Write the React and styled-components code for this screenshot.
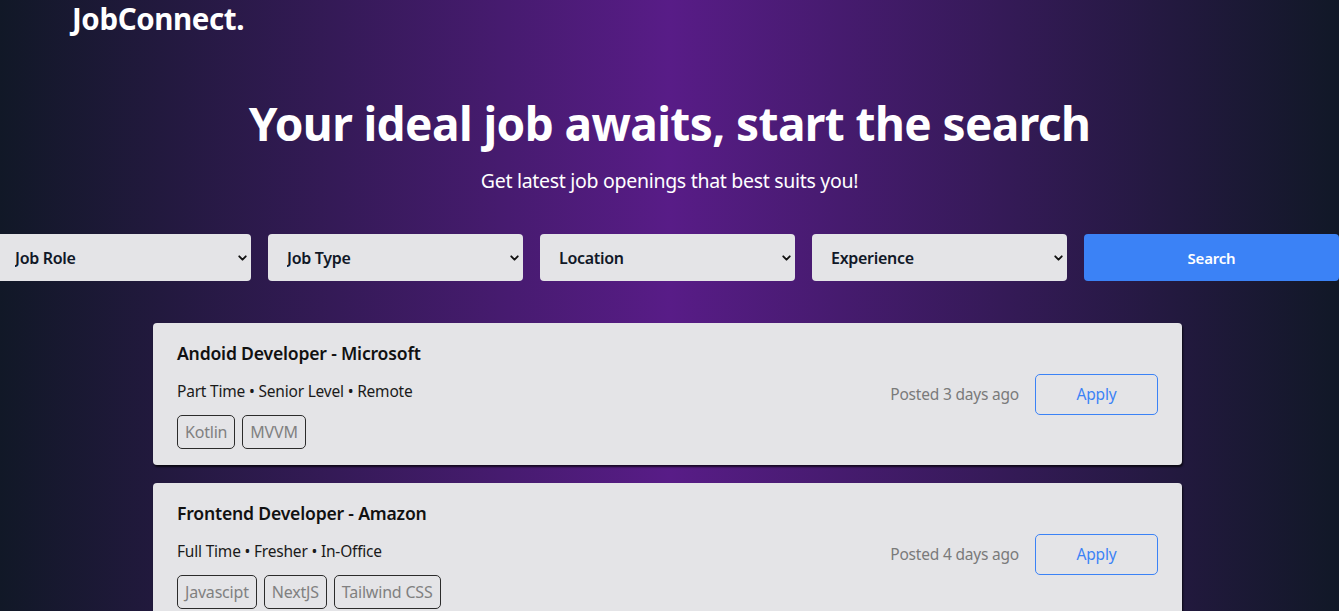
import React from 'react';
import styled, { createGlobalStyle } from 'styled-components';
import { ChevronDown } from 'lucide-react';

const GlobalStyle = createGlobalStyle`
  html, body {
    margin: 0;
    padding: 0;
    overflow: hidden;
  }
  body {
    font-family: 'Noto Sans', 'Open Sans', sans-serif;
    background: #111827;
  }
  * {
    box-sizing: border-box;
  }
`;

const Page = styled.div`
  min-height: 100vh;
  background: linear-gradient(to right, #111827, #581c87, #111827);
  padding-bottom: 40px;
`;

const Nav = styled.nav`
  padding: 1px 72px 0;
`;

const Logo = styled.h1`
  margin: 0;
  font-size: 29.5px;
  line-height: 36px;
  font-weight: 700;
  color: #ffffff;
  letter-spacing: -0.4px;
`;

const Hero = styled.header`
  display: flex;
  flex-direction: column;
  align-items: center;
  padding-top: 58px;
`;

const Headline = styled.h2`
  margin: 0;
  font-size: 46px;
  line-height: 56px;
  font-weight: 700;
  color: #ffffff;
  letter-spacing: -0.6px;
`;

const Subline = styled.p`
  margin: 16px 0 0;
  font-size: 19.5px;
  line-height: 28px;
  color: #ffffff;
  letter-spacing: -0.3px;
`;

const Filters = styled.form`
  display: grid;
  grid-template-columns: repeat(5, 1fr);
  gap: 17px;
  width: calc(100% + 4px);
  margin: 39px 0 0 -4px;
`;

const SelectBox = styled.div`
  position: relative;
  height: 47px;
`;

const Select = styled.select`
  appearance: none;
  width: 100%;
  height: 100%;
  border: none;
  border-radius: 4px;
  background: #e4e4e7;
  padding: 0 30px 0 19px;
  font-family: inherit;
  font-size: 16px;
  font-weight: 600;
  color: #111827;
  letter-spacing: -0.3px;
  outline: none;
`;

const Caret = styled(ChevronDown)`
  position: absolute;
  right: 2px;
  top: 50%;
  transform: translateY(-50%);
  color: #111;
  pointer-events: none;
`;

const SearchButton = styled.button`
  height: 47px;
  border: none;
  border-radius: 4px;
  background: #3b82f6;
  color: #ffffff;
  font-family: inherit;
  font-size: 15px;
  font-weight: 600;
  letter-spacing: -0.2px;
`;

const List = styled.main`
  display: flex;
  flex-direction: column;
  gap: 18px;
  width: 1029px;
  margin: 42px 0 0 153px;
`;

const Card = styled.article`
  display: flex;
  align-items: center;
  justify-content: space-between;
  background: #e4e4e7;
  border-radius: 4px;
  padding: 16px 24px;
  box-shadow: 1px 2px 2px rgba(0, 0, 0, 0.7);
`;

const Info = styled.div`
  display: flex;
  flex-direction: column;
`;

const Title = styled.h3`
  margin: 0;
  font-size: 17.6px;
  line-height: 28px;
  font-weight: 600;
  color: #111111;
  letter-spacing: -0.2px;
`;

const Meta = styled.p`
  margin: 12px 0 0;
  font-size: 15.5px;
  line-height: 24px;
  color: #1a1a1a;
  letter-spacing: -0.2px;
`;

const Tags = styled.div`
  display: flex;
  gap: 7px;
  margin-top: 12px;
`;

const Tag = styled.span`
  height: 34px;
  display: flex;
  align-items: center;
  padding: 0 7px;
  border: 1px solid #2b2b2b;
  border-radius: 5px;
  font-size: 16px;
  color: #808080;
  letter-spacing: -0.2px;
`;

const Actions = styled.div`
  display: flex;
  align-items: center;
  gap: 16px;
`;

const Posted = styled.span`
  font-size: 15.5px;
  color: #7a7a7a;
  letter-spacing: -0.2px;
`;

const ApplyButton = styled.button`
  width: 123px;
  height: 41px;
  background: transparent;
  border: 1px solid #3b82f6;
  border-radius: 5px;
  color: #3b82f6;
  font-family: inherit;
  font-size: 15.5px;
  letter-spacing: -0.2px;
`;

const filters = ['Job Role', 'Job Type', 'Location', 'Experience'];

const jobs = [
  {
    title: 'Andoid Developer - Microsoft',
    meta: ['Part Time', 'Senior Level', 'Remote'],
    tags: ['Kotlin', 'MVVM'],
    posted: 'Posted 3 days ago',
  },
  {
    title: 'Frontend Developer - Amazon',
    meta: ['Full Time', 'Fresher', 'In-Office'],
    tags: ['Javascipt', 'NextJS', 'Tailwind CSS'],
    posted: 'Posted 4 days ago',
  },
];

const App = () => {
  return (
    <Page>
      <GlobalStyle />
      <Nav>
        <Logo>JobConnect.</Logo>
      </Nav>
      <Hero>
        <Headline>Your ideal job awaits, start the search</Headline>
        <Subline>Get latest job openings that best suits you!</Subline>
      </Hero>
      <Filters onSubmit={(e) => e.preventDefault()}>
        {filters.map((name) => (
          <SelectBox key={name}>
            <Select defaultValue="">
              <option value="" disabled>
                {name}
              </option>
            </Select>
            <Caret size={13} strokeWidth={3.5} />
          </SelectBox>
        ))}
        <SearchButton type="submit">Search</SearchButton>
      </Filters>
      <List>
        {jobs.map((job) => (
          <Card key={job.title}>
            <Info>
              <Title>{job.title}</Title>
              <Meta>{job.meta.join(' • ')}</Meta>
              <Tags>
                {job.tags.map((tag) => (
                  <Tag key={tag}>{tag}</Tag>
                ))}
              </Tags>
            </Info>
            <Actions>
              <Posted>{job.posted}</Posted>
              <ApplyButton>Apply</ApplyButton>
            </Actions>
          </Card>
        ))}
      </List>
    </Page>
  );
};

export default App;
